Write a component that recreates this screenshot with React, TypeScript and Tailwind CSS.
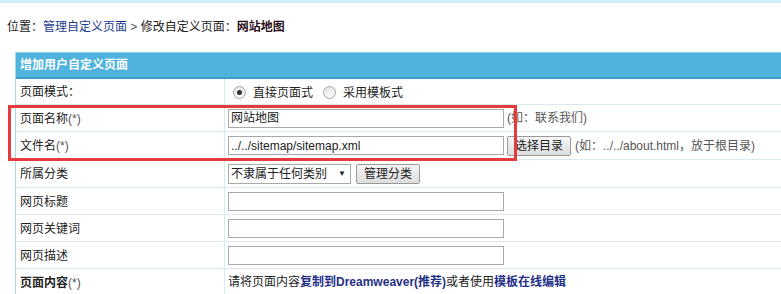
import React from "react";

const font = { fontFamily: '"Liberation Sans", "Noto Sans CJK SC", sans-serif' };

function Radio({ checked }: { checked?: boolean }) {
  return (
    <span className="inline-flex w-[13px] h-[13px] rounded-full border border-[#a8a8a8] bg-gradient-to-b from-[#e6e6e6] to-[#fafafa] items-center justify-center shrink-0">
      {checked && <span className="w-[5px] h-[5px] rounded-full bg-[#333]" />}
    </span>
  );
}

function Btn({ children }: { children: React.ReactNode }) {
  return (
    <span className="inline-flex items-center justify-center h-[20px] w-[64px] border border-[#9a9a9a] rounded-[2px] bg-gradient-to-b from-[#f6f6f6] to-[#dddddd] text-[12px] text-[#222]">
      {children}
    </span>
  );
}

function Input({ value }: { value?: string }) {
  return (
    <span className="inline-flex items-center w-[276px] h-[19px] border border-[#a9a9a9] bg-white pl-[2px] text-[12px] text-[#222] shrink-0">
      {value}
    </span>
  );
}

function Row({
  h,
  label,
  children,
}: {
  h: string;
  label: React.ReactNode;
  children?: React.ReactNode;
}) {
  return (
    <div className={`flex border-b border-[#dbe9f1] ${h}`}>
      <div className="w-[209px] shrink-0 border-r border-[#d4eaf5] flex items-center pl-[4px] pt-[1px] text-[12px] text-[#222]">
        {label}
      </div>
      <div className="flex-1 flex items-center pl-[3px] text-[12px] text-[#222] whitespace-nowrap">
        {children}
      </div>
    </div>
  );
}

export default function App() {
  return (
    <div className="relative w-[781px] h-[294px] overflow-hidden bg-white" style={font}>
      <div className="h-[3px] bg-[#cdeffa]" />
      <div className="h-[49px] pt-[14px] pl-[7px] text-[12px] leading-[20px] text-[#222] whitespace-nowrap">
        位置：<span className="text-[#1d3b8c]">管理自定义页面</span>
        <span className="text-[#555]"> &gt; </span>修改自定义页面：
        <span className="font-bold text-[#2a1020]">网站地图</span>
      </div>
      <div className="ml-[15px] border-l border-[#a5d8ee]">
        <div className="h-[27px] border-t border-[#8fd0ec] border-b-2 border-b-[#3f9dc8] bg-[#4fb3de] flex items-center pl-[4px] text-[12px] font-bold text-white">
          增加用户自定义页面
        </div>
        <Row h="h-[26px]" label="页面模式：">
          <span className="ml-[5px] mt-[1px] flex">
            <Radio checked />
          </span>
          <span className="ml-[7px] mt-[2px]">直接页面式</span>
          <span className="ml-[10px] mt-[1px] flex">
            <Radio />
          </span>
          <span className="ml-[7px] mt-[2px]">采用模板式</span>
        </Row>
        <Row
          h="h-[27px]"
          label={
            <>
              页面名称<span className="text-[#555]">(*)</span>
            </>
          }
        >
          <Input value="网站地图" />
          <span className="ml-[3px] text-[#555]">(如：联系我们)</span>
        </Row>
        <Row
          h="h-[28px]"
          label={
            <>
              文件名<span className="text-[#555]">(*)</span>
            </>
          }
        >
          <Input value="../../sitemap/sitemap.xml" />
          <span className="ml-[3px] flex">
            <Btn>选择目录</Btn>
          </span>
          <span className="ml-[4px] text-[#555]">(如：../../about.html，放于根目录)</span>
        </Row>
        <Row h="h-[28px]" label="所属分类">
          <span className="inline-flex items-center justify-between w-[123px] h-[20px] border border-[#a9a9a9] bg-white pl-[2px] pr-[4px] text-[12px] text-[#222]">
            <span>不隶属于任何类别</span>
            <span className="text-[8px]">▼</span>
          </span>
          <span className="ml-[5px] flex">
            <Btn>管理分类</Btn>
          </span>
        </Row>
        <Row h="h-[27px]" label="网页标题">
          <Input />
        </Row>
        <Row h="h-[27px]" label="网页关键词">
          <Input />
        </Row>
        <Row h="h-[27px]" label="网页描述">
          <Input />
        </Row>
        <Row
          h="h-[27px]"
          label={
            <>
              <span className="font-bold text-[#222]">页面内容</span>
              <span className="text-[#555]">(*)</span>
            </>
          }
        >
          <span>
            请将页面内容
            <span className="font-bold text-[#1f2f86]">复制到Dreamweaver(推荐)</span>
            或者使用
            <span className="font-bold text-[#1f2f86]">模板在线编辑</span>
          </span>
        </Row>
      </div>
      <div className="absolute left-[8px] top-[105px] w-[509px] h-[56px] border-[3px] border-[#e53b3f]" />
    </div>
  );
}
